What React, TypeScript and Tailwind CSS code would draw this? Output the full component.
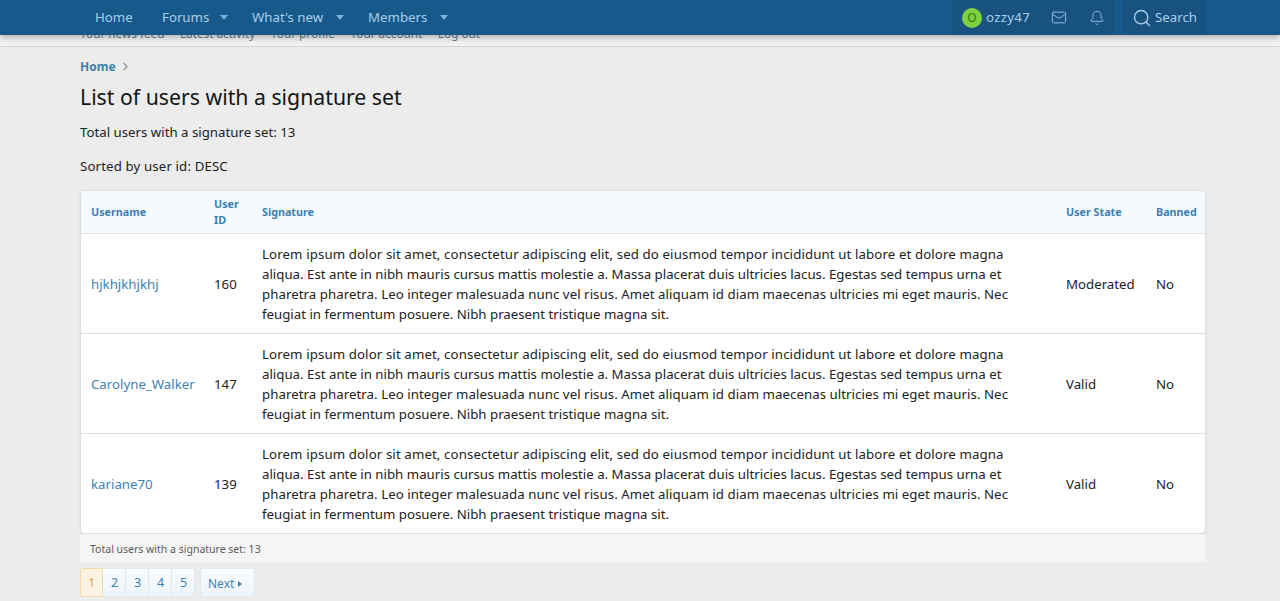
import React from 'react';
import { ChevronRight, Mail, Bell, Search } from 'lucide-react';

const FONT = "font-['Noto_Sans','Open_Sans',sans-serif]";

const LOREM = [
  { text: 'Lorem ipsum dolor sit amet, consectetur adipiscing elit, sed do eiusmod tempor incididunt ut labore et dolore magna', track: 'tracking-[0.11px]' },
  { text: 'aliqua. Est ante in nibh mauris cursus mattis molestie a. Massa placerat duis ultricies lacus. Egestas sed tempus urna et', track: '' },
  { text: 'pharetra pharetra. Leo integer malesuada nunc vel risus. Amet aliquam id diam maecenas ultricies mi eget mauris. Nec', track: 'tracking-[0.05px]' },
  { text: 'feugiat in fermentum posuere. Nibh praesent tristique magna sit.', track: '' },
];

const USERS = [
  { name: 'hjkhjkhjkhj', id: 160, state: 'Moderated', banned: 'No' },
  { name: 'Carolyne_Walker', id: 147, state: 'Valid', banned: 'No' },
  { name: 'kariane70', id: 139, state: 'Valid', banned: 'No' },
];

const NavItem: React.FC<{ label: string; caretGap?: string; width: string }> = ({ label, caretGap, width }) => (
  <div className={`flex items-center ${width}`}>
    <span>{label}</span>
    {caretGap && (
      <span className={`${caretGap} h-0 w-0 border-x-[4.5px] border-t-[5px] border-x-transparent border-t-[#7fb0d6]`} />
    )}
  </div>
);

const PageLink: React.FC<{ label: string; active?: boolean }> = ({ label, active }) => (
  <div
    className={
      active
        ? 'flex h-[29px] w-[23px] items-center justify-center border border-[#f5d9a8] bg-[#fdf3e2] pt-[2px] text-[#d9a45f] rounded-l-[3px]'
        : 'flex h-[29px] w-[23px] items-center justify-center border border-l-0 border-[#dfe9f2] bg-gradient-to-b from-[#fafcfe] to-[#edf4fa] pl-[1px] pt-[2px] text-[#3f83b5] last:rounded-r-[3px]'
    }
  >
    {label}
  </div>
);

export default function App() {
  return (
    <div className={`h-[601px] overflow-hidden bg-[#ececec] text-[13.25px] text-[#222222] ${FONT}`}>
      {/* Top nav */}
      <div className="relative z-10 flex h-[35px] items-center bg-[#17598a] pl-[95px] pr-[74px] text-[13.25px] text-[#a9cee9] shadow-[0_3px_6px_rgba(0,0,0,0.25)]">
        <NavItem label="Home" width="w-[67px]" />
        <NavItem label="Forums" caretGap="ml-[11px]" width="w-[90px]" />
        <NavItem label="What's new" caretGap="ml-[13px]" width="w-[116px]" />
        <NavItem label="Members" caretGap="ml-[13px]" width="w-[90px]" />
        <div className="ml-auto flex h-full items-center">
          <div className="flex h-full w-[163px] items-center bg-[#18527f] pl-[10px]">
            <div className="flex h-[20px] w-[20px] shrink-0 items-center justify-center rounded-full bg-[#7fd03f] text-[12px] text-[#2f7a17]">O</div>
            <span className="ml-[4px] w-[44px] tracking-[0.3px]">ozzy47</span>
            <div className="ml-[21px] flex w-[16px] justify-center"><Mail size={17} strokeWidth={1.5} className="text-[#8fbcdd]" /></div>
            <div className="ml-[22px] flex w-[16px] justify-center"><Bell size={16} strokeWidth={1.5} className="text-[#8fbcdd]" /></div>
          </div>
          <div className="ml-[8px] flex h-full w-[83px] items-center bg-[#18527f] pl-[9px]">
            <Search size={20} strokeWidth={1.7} className="shrink-0" />
            <span className="ml-[3px]">Search</span>
          </div>
        </div>
      </div>

      {/* Sub nav clipped under the sticky bar */}
      <div className="h-[12px] overflow-hidden border-b border-[#d4d4d4] bg-[#f2f2f2] pl-[80px] text-[11.75px] leading-[16px] text-[#6b7f90]">
        <div className="mt-[-10px] flex gap-[15.5px]">
          <span>Your news feed</span>
          <span>Latest activity</span>
          <span>Your profile</span>
          <span>Your account</span>
          <span>Log out</span>
        </div>
      </div>

      <div className="pl-[80px] pr-[74px]">
        {/* Breadcrumb */}
        <div className="mt-[11px] flex h-[17px] items-center text-[12px] font-bold text-[#3f7fb0]">
          <span>Home</span>
          <ChevronRight size={13} className="ml-[3px] text-[#8c8c8c]" />
        </div>

        <h1 className="mt-[7px] text-[21.25px] leading-[30px] text-[#141414]">List of users with a signature set</h1>

        <p className="mt-[10px] leading-[20px]">Total users with a signature set: 13</p>
        <p className="mt-[14px] leading-[20px] tracking-[0.13px]">Sorted by user id: DESC</p>

        {/* Table */}
        <div className="mt-[14px] overflow-hidden rounded-[4px] border border-[#dfdfdf] bg-white shadow-[0_1px_2px_rgba(0,0,0,0.1)]">
          <table className="w-full table-fixed border-collapse">
            <colgroup>
              <col className="w-[123px]" />
              <col className="w-[48px]" />
              <col />
              <col className="w-[90px]" />
              <col className="w-[59px]" />
            </colgroup>
            <thead>
              <tr className="h-[42px] bg-[#f5faff] text-left text-[10.75px] font-bold leading-[16px] text-[#3f7fb0]">
                <th className="px-[10px]">Username</th>
                <th className="px-[10px] pt-[1px]">User<br />ID</th>
                <th className="px-[10px]">Signature</th>
                <th className="px-[10px]">User State</th>
                <th className="px-[10px]">Banned</th>
              </tr>
            </thead>
            <tbody>
              {USERS.map((u) => (
                <tr key={u.id} className="h-[100px] border-t border-[#dedede]">
                  <td className="px-[10px] pt-[4px] whitespace-nowrap text-[#3f7fb0]">{u.name}</td>
                  <td className="px-[10px] pt-[4px]">{u.id}</td>
                  <td className="px-[10px] pt-[2px] leading-[20px] whitespace-nowrap">
                    {LOREM.map((line) => (
                      <div key={line.text} className={line.track}>{line.text}</div>
                    ))}
                  </td>
                  <td className="px-[10px] pt-[4px]">{u.state}</td>
                  <td className="px-[10px] pt-[4px]">{u.banned}</td>
                </tr>
              ))}
            </tbody>
          </table>
        </div>

        {/* Footer strip */}
        <div className="flex h-[28px] items-center bg-[#f5f5f5] pl-[10px] pt-[4px] text-[10.5px] text-[#5c5c5c]">
          Total users with a signature set: 13
        </div>

        {/* Pagination */}
        <div className="mt-[6px] flex text-[12.5px]">
          <div className="flex">
            <PageLink label="1" active />
            <PageLink label="2" />
            <PageLink label="3" />
            <PageLink label="4" />
            <PageLink label="5" />
          </div>
          <div className="ml-[5px] flex h-[29px] w-[55px] items-center rounded-[3px] border border-[#dfe9f2] bg-gradient-to-b from-[#fafcfe] to-[#edf4fa] pl-[7px] pt-[2px] text-[12px] text-[#3f83b5]">
            Next
            <span className="ml-[4px] h-0 w-0 border-y-[3px] border-l-[4px] border-y-transparent border-l-[#3f83b5]" />
          </div>
        </div>
      </div>
    </div>
  );
}
